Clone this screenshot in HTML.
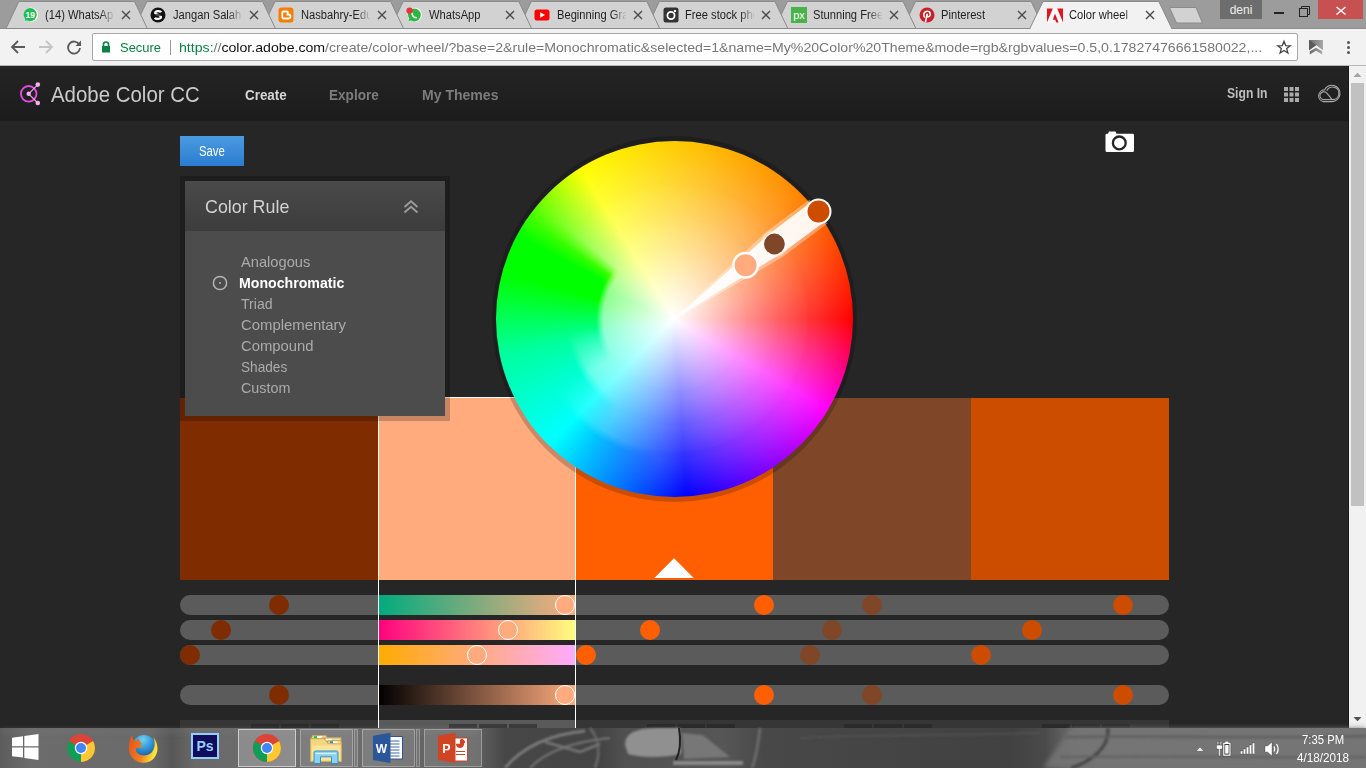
<!DOCTYPE html>
<html><head><meta charset="utf-8"><style>
*{margin:0;padding:0;box-sizing:border-box}
html,body{width:1366px;height:768px;overflow:hidden;background:#262626;font-family:"Liberation Sans",sans-serif}
.a{position:absolute}
svg{position:absolute;overflow:visible}
.tt{position:absolute;font-size:12px;color:#1e1e1e;white-space:nowrap;overflow:hidden;line-height:14px}
</style></head><body>
<div class="a" style="left:0;top:0;width:1366px;height:29px;background:#9c9c9c"></div>
<svg width="1366" height="30" style="left:0;top:0"><line x1="0" y1="28.5" x2="1366" y2="28.5" stroke="#8e8e8e" stroke-width="1"/><path d="M902.7 28.5 L915.5 1.5 L1031.2 1.5 L1044.0 28.5 Z" fill="#d2d2d2" stroke="#8a8a8a" stroke-width="1"/><path d="M774.6 28.5 L787.4 1.5 L903.1 1.5 L915.9 28.5 Z" fill="#d2d2d2" stroke="#8a8a8a" stroke-width="1"/><path d="M646.5 28.5 L659.3 1.5 L775.0 1.5 L787.8 28.5 Z" fill="#d2d2d2" stroke="#8a8a8a" stroke-width="1"/><path d="M518.4 28.5 L531.2 1.5 L646.9 1.5 L659.7 28.5 Z" fill="#d2d2d2" stroke="#8a8a8a" stroke-width="1"/><path d="M390.3 28.5 L403.1 1.5 L518.8 1.5 L531.6 28.5 Z" fill="#d2d2d2" stroke="#8a8a8a" stroke-width="1"/><path d="M262.2 28.5 L275.0 1.5 L390.7 1.5 L403.5 28.5 Z" fill="#d2d2d2" stroke="#8a8a8a" stroke-width="1"/><path d="M134.1 28.5 L146.9 1.5 L262.6 1.5 L275.4 28.5 Z" fill="#d2d2d2" stroke="#8a8a8a" stroke-width="1"/><path d="M6.0 28.5 L18.8 1.5 L134.5 1.5 L147.3 28.5 Z" fill="#d2d2d2" stroke="#8a8a8a" stroke-width="1"/><path d="M1029.8 28.5 L1043.0 1.5 L1158.8 1.5 L1171.8 28.5" fill="#f2f2f2" stroke="#8a8a8a" stroke-width="1"/><rect x="1030.8" y="28" width="140" height="2" fill="#f2f2f2"/><path d="M1169.5 7.5 L1196 7.5 L1202.5 23 L1176.5 23 Z" fill="#d2d2d2" stroke="#8a8a8a" stroke-width="1"/></svg>
<svg width="16" height="16" style="left:22.0px;top:6.5px" viewBox="0 0 16 16"><path d="M2.2 14.6 L3.2 11.2 A7 7 0 1 1 5.6 13.6 Z" fill="#fff"/><circle cx="8.2" cy="7.6" r="6.6" fill="#1ebe55"/><path d="M2.6 14.2 L3.6 10.8 L5.8 13 Z" fill="#1ebe55"/><text x="8.2" y="10.6" font-size="8.5" font-weight="bold" fill="#fff" text-anchor="middle" font-family="Liberation Sans">19</text></svg>
<div class="tt" style="left:44.5px;top:7.5px;width:69px"><span style="display:inline-block;transform:scaleX(0.93);transform-origin:0 0">(14) WhatsApp</span></div>
<div class="a" style="left:99.5px;top:6px;width:15px;height:18px;background:linear-gradient(90deg,rgba(0,0,0,0),#d2d2d2)"></div>
<svg width="10" height="10" style="left:120.5px;top:10px" viewBox="0 0 10 10"><path d="M1 1 L9 9 M9 1 L1 9" stroke="#4a4a4a" stroke-width="1.4"/></svg>
<svg width="16" height="16" style="left:150.1px;top:6.5px" viewBox="0 0 16 16"><circle cx="8" cy="8" r="7.5" fill="#111"/><path d="M11.2 5.2 C10.5 3.8 5.2 3.6 5.2 5.9 C5.2 8.2 11 7.4 11 10.1 C11 12.4 5.6 12.3 4.8 10.9" stroke="#fff" stroke-width="2.2" fill="none"/><rect x="3" y="7.3" width="10" height="1.4" fill="#111"/></svg>
<div class="tt" style="left:172.6px;top:7.5px;width:69px"><span style="display:inline-block;transform:scaleX(0.93);transform-origin:0 0">Jangan Salah Pilih</span></div>
<div class="a" style="left:227.6px;top:6px;width:15px;height:18px;background:linear-gradient(90deg,rgba(0,0,0,0),#d2d2d2)"></div>
<svg width="10" height="10" style="left:248.6px;top:10px" viewBox="0 0 10 10"><path d="M1 1 L9 9 M9 1 L1 9" stroke="#4a4a4a" stroke-width="1.4"/></svg>
<svg width="16" height="16" style="left:278.2px;top:6.5px" viewBox="0 0 16 16"><rect x="0.5" y="0.5" width="15" height="15" rx="3" fill="#f57d00"/><path d="M5 4.5 H8.5 A1.5 1.5 0 0 1 8.5 7.5 H10.5 A1.5 1.5 0 0 1 10.5 11.5 H5.5 A1.2 1.2 0 0 1 4.3 10.3 V5.7 A1.2 1.2 0 0 1 5 4.5Z" fill="none" stroke="#fff" stroke-width="1.8"/></svg>
<div class="tt" style="left:300.7px;top:7.5px;width:69px"><span style="display:inline-block;transform:scaleX(0.93);transform-origin:0 0">Nasbahry-Edu</span></div>
<div class="a" style="left:355.7px;top:6px;width:15px;height:18px;background:linear-gradient(90deg,rgba(0,0,0,0),#d2d2d2)"></div>
<svg width="10" height="10" style="left:376.7px;top:10px" viewBox="0 0 10 10"><path d="M1 1 L9 9 M9 1 L1 9" stroke="#4a4a4a" stroke-width="1.4"/></svg>
<svg width="16" height="16" style="left:406.3px;top:6.5px" viewBox="0 0 16 16"><path d="M1.6 15 L2.8 11.4 A7 7 0 1 1 5.2 13.8 Z" fill="#fff"/><circle cx="8.4" cy="8" r="6.4" fill="#2bb741"/><path d="M2.2 14.4 L3.3 11 L5.4 13.2 Z" fill="#2bb741"/><path d="M6 5.5 C6 9 8 10.8 11 10.8" stroke="#fff" stroke-width="1.6" fill="none"/><circle cx="3.6" cy="3.6" r="3.2" fill="#e8323c"/></svg>
<div class="tt" style="left:428.8px;top:7.5px;width:69px"><span style="display:inline-block;transform:scaleX(0.93);transform-origin:0 0">WhatsApp</span></div>
<div class="a" style="left:483.8px;top:6px;width:15px;height:18px;background:linear-gradient(90deg,rgba(0,0,0,0),#d2d2d2)"></div>
<svg width="10" height="10" style="left:504.8px;top:10px" viewBox="0 0 10 10"><path d="M1 1 L9 9 M9 1 L1 9" stroke="#4a4a4a" stroke-width="1.4"/></svg>
<svg width="16" height="16" style="left:534.4px;top:6.5px" viewBox="0 0 16 16"><rect x="0.5" y="2.5" width="15" height="11" rx="2.5" fill="#f00"/><path d="M6.2 5.2 L11 8 L6.2 10.8 Z" fill="#fff"/></svg>
<div class="tt" style="left:556.9px;top:7.5px;width:69px"><span style="display:inline-block;transform:scaleX(0.93);transform-origin:0 0">Beginning Graphic</span></div>
<div class="a" style="left:611.9px;top:6px;width:15px;height:18px;background:linear-gradient(90deg,rgba(0,0,0,0),#d2d2d2)"></div>
<svg width="10" height="10" style="left:632.9px;top:10px" viewBox="0 0 10 10"><path d="M1 1 L9 9 M9 1 L1 9" stroke="#4a4a4a" stroke-width="1.4"/></svg>
<svg width="16" height="16" style="left:662.5px;top:6.5px" viewBox="0 0 16 16"><rect x="0.5" y="0.5" width="15" height="15" rx="2.5" fill="#333"/><circle cx="8" cy="8.5" r="3.6" fill="none" stroke="#fff" stroke-width="1.8"/><rect x="11" y="3" width="2" height="2" fill="#fff"/></svg>
<div class="tt" style="left:685.0px;top:7.5px;width:69px"><span style="display:inline-block;transform:scaleX(0.93);transform-origin:0 0">Free stock photos</span></div>
<div class="a" style="left:740.0px;top:6px;width:15px;height:18px;background:linear-gradient(90deg,rgba(0,0,0,0),#d2d2d2)"></div>
<svg width="10" height="10" style="left:761.0px;top:10px" viewBox="0 0 10 10"><path d="M1 1 L9 9 M9 1 L1 9" stroke="#4a4a4a" stroke-width="1.4"/></svg>
<svg width="16" height="16" style="left:790.6px;top:6.5px" viewBox="0 0 16 16"><rect x="0" y="0" width="16" height="16" fill="#48b348"/><text x="8" y="12" font-size="11" fill="#fff" text-anchor="middle" font-family="Liberation Sans">px</text></svg>
<div class="tt" style="left:813.1px;top:7.5px;width:69px"><span style="display:inline-block;transform:scaleX(0.93);transform-origin:0 0">Stunning Free</span></div>
<div class="a" style="left:868.1px;top:6px;width:15px;height:18px;background:linear-gradient(90deg,rgba(0,0,0,0),#d2d2d2)"></div>
<svg width="10" height="10" style="left:889.1px;top:10px" viewBox="0 0 10 10"><path d="M1 1 L9 9 M9 1 L1 9" stroke="#4a4a4a" stroke-width="1.4"/></svg>
<svg width="16" height="16" style="left:918.7px;top:6.5px" viewBox="0 0 16 16"><circle cx="8" cy="8" r="7.5" fill="#cb2027"/><path d="M6.5 14.5 L8.2 7.6 M5.6 10 C4 8.5 4.6 4.2 8.4 4.2 C12 4.2 12.2 9.6 9 9.8 C7.8 9.9 7.6 8.8 7.9 7.6" stroke="#fff" stroke-width="1.6" fill="none" stroke-linecap="round"/></svg>
<div class="tt" style="left:941.2px;top:7.5px;width:69px"><span style="display:inline-block;transform:scaleX(0.93);transform-origin:0 0">Pinterest</span></div>
<div class="a" style="left:996.2px;top:6px;width:15px;height:18px;background:linear-gradient(90deg,rgba(0,0,0,0),#d2d2d2)"></div>
<svg width="10" height="10" style="left:1017.2px;top:10px" viewBox="0 0 10 10"><path d="M1 1 L9 9 M9 1 L1 9" stroke="#4a4a4a" stroke-width="1.4"/></svg>
<svg width="16" height="16" style="left:1046.8px;top:6.5px" viewBox="0 0 16 16"><rect x="0" y="1.5" width="16" height="14" fill="#fff"/><path d="M0 1.5 H5.8 L0 15.5 Z M10.2 1.5 H16 V15.5 Z M8 6.5 L11.6 15.5 H9.2 L8.2 12.8 H5.8 Z" fill="#e1151b"/></svg>
<div class="tt" style="left:1069.3px;top:7.5px;width:69px"><span style="display:inline-block;transform:scaleX(0.93);transform-origin:0 0">Color wheel</span></div>
<div class="a" style="left:1124.3px;top:6px;width:15px;height:18px;background:linear-gradient(90deg,rgba(0,0,0,0),#f2f2f2)"></div>
<svg width="10" height="10" style="left:1145.3px;top:10px" viewBox="0 0 10 10"><path d="M1 1 L9 9 M9 1 L1 9" stroke="#4a4a4a" stroke-width="1.4"/></svg>
<div class="a" style="left:1220px;top:0;width:42px;height:19px;background:#6d6d6d;color:#eee;font-size:12px;line-height:20px;text-align:center">deni</div>
<div class="a" style="left:1274px;top:12px;width:10px;height:2px;background:#222"></div>
<svg width="14" height="14" style="left:1298px;top:4px" viewBox="0 0 14 14"><rect x="1.5" y="4.5" width="8" height="8" fill="none" stroke="#222" stroke-width="1"/><path d="M3.5 4.5 V2.5 H11.5 V10.5 H9.5" fill="none" stroke="#222" stroke-width="1"/></svg>
<div class="a" style="left:1318px;top:0;width:45px;height:19px;background:#c75050"></div>
<svg width="12" height="12" style="left:1335px;top:4.5px" viewBox="0 0 12 12"><path d="M1.5 2 L10.5 9.5 M10.5 2 L1.5 9.5" stroke="#fff" stroke-width="1.5"/></svg>
<div class="a" style="left:0;top:29px;width:1366px;height:37px;background:#f2f2f2"></div>
<div class="a" style="left:0;top:65px;width:1366px;height:1px;background:#b8b8b8"></div>
<svg width="16" height="16" style="left:10px;top:39px" viewBox="0 0 16 16"><path d="M15 8 H2.5 M8 2 L2 8 L8 14" stroke="#5a5a5a" stroke-width="1.8" fill="none"/></svg>
<svg width="16" height="16" style="left:38px;top:39px" viewBox="0 0 16 16"><path d="M1 8 H13.5 M8 2 L14 8 L8 14" stroke="#c4c4c4" stroke-width="1.8" fill="none"/></svg>
<svg width="16" height="16" style="left:66px;top:39px" viewBox="0 0 16 16"><path d="M13.2 5.5 A6 6 0 1 0 14 9" stroke="#5a5a5a" stroke-width="1.8" fill="none"/><path d="M15 1.5 V7 H9.5 Z" fill="#5a5a5a"/></svg>
<div class="a" style="left:92px;top:33px;width:1206px;height:28px;background:#fff;border:1px solid #a9a9a9;border-radius:2px"></div>
<svg width="10" height="12" style="left:101px;top:41px" viewBox="0 0 10 12"><path d="M2.5 5 V3.5 A2.5 2.5 0 0 1 7.5 3.5 V5" stroke="#0b8043" stroke-width="1.6" fill="none"/><rect x="1" y="5" width="8" height="6.5" fill="#0b8043"/></svg>
<div class="a" style="left:119.50px;top:40.57px;font-size:13.5px;line-height:13.5px;color:#0b8043;font-weight:normal;white-space:nowrap;transform:scaleX(0.9582);transform-origin:0 0;">Secure</div>
<div class="a" style="left:170px;top:40px;width:1px;height:15px;background:#9a9a9a"></div>
<div class="a" style="left:178.70px;top:40.57px;font-size:13.5px;line-height:13.5px;color:#777;font-weight:normal;white-space:nowrap;transform:scaleX(1.0466);transform-origin:0 0;"><span style="color:#0b8043">https:</span>//<span style="color:#111">color.adobe.com</span>/create/color-wheel/?base=2&amp;rule=Monochromatic&amp;selected=1&amp;name=My%20Color%20Theme&amp;mode=rgb&amp;rgbvalues=0.5,0.17827476661580022,...</div>
<svg width="16" height="16" style="left:1276px;top:39px" viewBox="0 0 16 16"><path d="M8 2.3 L9.7 6.6 L14.2 6.8 L10.7 9.6 L11.9 14 L8 11.5 L4.1 14 L5.3 9.6 L1.8 6.8 L6.3 6.6 Z" fill="none" stroke="#444" stroke-width="1.3" stroke-linejoin="miter"/></svg>
<svg width="16" height="16" style="left:1308px;top:39px" viewBox="0 0 16 16"><defs><linearGradient id="exg" x1="0" x2="1"><stop offset="0" stop-color="#6a6a6a"/><stop offset="1" stop-color="#a8a8a8"/></linearGradient></defs><path d="M1 1 H15 V11.2 L8 6 L1 11.2 Z" fill="url(#exg)"/><path d="M1 1 L8.2 6.2 L1 11.2 Z" fill="#5a5a5a"/><path d="M1.8 12.3 L8 8.8 L14.2 12.3 V15.4 L8 11.8 L1.8 15.4 Z" fill="url(#exg)"/></svg>
<div class="a" style="left:1347px;top:41px;width:3px;height:3px;background:#555;border-radius:50%"></div>
<div class="a" style="left:1347px;top:46px;width:3px;height:3px;background:#555;border-radius:50%"></div>
<div class="a" style="left:1347px;top:51px;width:3px;height:3px;background:#555;border-radius:50%"></div>
<div class="a" style="left:0;top:66px;width:1349px;height:662px;background:#262626"></div>
<div class="a" style="left:0;top:66px;width:1349px;height:55px;background:linear-gradient(#242424,#1c1c1c)"></div>
<svg width="30" height="30" style="left:15px;top:79px" viewBox="0 0 30 30"><circle cx="13.7" cy="14.8" r="7.8" fill="none" stroke="#e64ce6" stroke-width="1.8"/><path d="M13.7 14.8 L22.8 5.6 M13.7 14.8 L22.8 24" stroke="#e8a0e8" stroke-width="1.2"/><circle cx="22.8" cy="5.6" r="2.3" fill="#f2b0f2"/><circle cx="22.8" cy="24" r="2.3" fill="#f2b0f2"/><circle cx="13.7" cy="14.8" r="2.2" fill="#f2b0f2"/></svg>
<div class="a" style="left:51.20px;top:84.15px;font-size:22.5px;line-height:22.5px;color:#cacaca;font-weight:normal;white-space:nowrap;transform:scaleX(0.9078);transform-origin:0 0;">Adobe Color CC</div>
<div class="a" style="left:245.40px;top:87.30px;font-size:15px;line-height:15px;color:#d6d6d6;font-weight:bold;white-space:nowrap;transform:scaleX(0.8932);transform-origin:0 0;">Create</div>
<div class="a" style="left:329.49px;top:87.30px;font-size:15px;line-height:15px;color:#7c7c7c;font-weight:bold;white-space:nowrap;transform:scaleX(0.9054);transform-origin:0 0;">Explore</div>
<div class="a" style="left:421.66px;top:87.30px;font-size:15px;line-height:15px;color:#7c7c7c;font-weight:bold;white-space:nowrap;transform:scaleX(0.9359);transform-origin:0 0;">My Themes</div>
<div class="a" style="left:1227.00px;top:85.95px;font-size:14px;line-height:14px;color:#bdbdbd;font-weight:bold;white-space:nowrap;transform:scaleX(0.8675);transform-origin:0 0;">Sign In</div>
<svg width="16" height="16" style="left:1284px;top:87px" viewBox="0 0 16 16"><rect x="0.0" y="0.0" width="4" height="4" fill="#aaa"/><rect x="5.5" y="0.0" width="4" height="4" fill="#aaa"/><rect x="11.0" y="0.0" width="4" height="4" fill="#aaa"/><rect x="0.0" y="5.5" width="4" height="4" fill="#aaa"/><rect x="5.5" y="5.5" width="4" height="4" fill="#aaa"/><rect x="11.0" y="5.5" width="4" height="4" fill="#aaa"/><rect x="0.0" y="11.0" width="4" height="4" fill="#aaa"/><rect x="5.5" y="11.0" width="4" height="4" fill="#aaa"/><rect x="11.0" y="11.0" width="4" height="4" fill="#aaa"/></svg>
<svg width="24" height="20" style="left:1317px;top:84px" viewBox="0 0 24 20"><path d="M6.5 17.6 A5.9 5.9 0 0 1 7.4 5.9 A8.2 8.2 0 1 1 15.2 17.6 Z" fill="none" stroke="#ababab" stroke-width="1.1"/><path d="M7 15.6 A3.9 3.9 0 1 1 9.5 8.9 L12.8 12.6 C13.8 13.8 14.5 15.6 15.5 15.6 A6.3 6.3 0 1 0 9.8 6.8" fill="none" stroke="#ababab" stroke-width="1.1"/><path d="M7 15.6 H15.5" stroke="#ababab" stroke-width="1.1"/></svg>
<div class="a" style="left:180px;top:136px;width:64px;height:30px;background:linear-gradient(#4b9be2,#2a7ccf)"></div>
<div class="a" style="left:199.00px;top:144.15px;font-size:14px;line-height:14px;color:#fff;font-weight:normal;white-space:nowrap;transform:scaleX(0.8094);transform-origin:0 0;">Save</div>
<svg width="32" height="24" style="left:1104px;top:130px" viewBox="0 0 32 24"><path d="M1.5 5 Q1.5 3.8 3 3.8 H4 L5 1.5 H11.5 L12.5 3.8 H28.5 Q30 3.8 30 5 V20.5 Q30 22 28.5 22 H3 Q1.5 22 1.5 20.5 Z" fill="#fff"/><circle cx="15.3" cy="12.9" r="6.4" fill="none" stroke="#262626" stroke-width="2.3"/></svg>
<div class="a" style="left:180.00px;top:398px;width:198.30px;height:182px;background:#7f2d00"></div>
<div class="a" style="left:377.80px;top:398px;width:198.30px;height:182px;background:#ffab7e"></div>
<div class="a" style="left:575.60px;top:398px;width:198.30px;height:182px;background:#ff5f00"></div>
<div class="a" style="left:773.40px;top:398px;width:198.30px;height:182px;background:#7f4627"></div>
<div class="a" style="left:971.20px;top:398px;width:198.30px;height:182px;background:#cc4c00"></div>
<svg width="40" height="22" style="left:654px;top:558px" viewBox="0 0 40 22"><path d="M0.3 20 L20 0.3 L39.7 20 Z" fill="#fff"/></svg>
<div class="a" style="left:180px;top:595px;width:989px;height:20px;border-radius:10px;background:#5b5b5b"></div>
<div class="a" style="left:180px;top:620px;width:989px;height:20px;border-radius:10px;background:#5b5b5b"></div>
<div class="a" style="left:180px;top:645px;width:989px;height:20px;border-radius:10px;background:#5b5b5b"></div>
<div class="a" style="left:180px;top:685px;width:989px;height:20px;border-radius:10px;background:#5b5b5b"></div>
<div class="a" style="left:378px;top:595px;width:198px;height:20px;background:linear-gradient(90deg,rgb(0,171,126),rgb(255,171,126))"></div>
<div class="a" style="left:378px;top:620px;width:198px;height:20px;background:linear-gradient(90deg,rgb(255,0,126),rgb(255,255,126))"></div>
<div class="a" style="left:378px;top:645px;width:198px;height:20px;background:linear-gradient(90deg,rgb(255,171,0),rgb(255,171,255))"></div>
<div class="a" style="left:378px;top:685px;width:198px;height:20px;background:linear-gradient(90deg,#000,#ffab7e)"></div>
<div class="a" style="left:268.6px;top:595px;width:20px;height:20px;border-radius:50%;background:#7f2d00"></div>
<div class="a" style="left:211.4px;top:620px;width:20px;height:20px;border-radius:50%;background:#7f2d00"></div>
<div class="a" style="left:180.0px;top:645px;width:20px;height:20px;border-radius:50%;background:#7f2d00"></div>
<div class="a" style="left:268.6px;top:685px;width:20px;height:20px;border-radius:50%;background:#7f2d00"></div>
<div class="a" style="left:554.7px;top:595px;width:20px;height:20px;border-radius:50%;background:#ffab7e;border:1px solid #fff"></div>
<div class="a" style="left:498.0px;top:620px;width:20px;height:20px;border-radius:50%;background:#ffab7e;border:1px solid #fff"></div>
<div class="a" style="left:466.9px;top:645px;width:20px;height:20px;border-radius:50%;background:#ffab7e;border:1px solid #fff"></div>
<div class="a" style="left:554.7px;top:685px;width:20px;height:20px;border-radius:50%;background:#ffab7e;border:1px solid #fff"></div>
<div class="a" style="left:753.6px;top:595px;width:20px;height:20px;border-radius:50%;background:#ff5f00"></div>
<div class="a" style="left:640.0px;top:620px;width:20px;height:20px;border-radius:50%;background:#ff5f00"></div>
<div class="a" style="left:576.3px;top:645px;width:20px;height:20px;border-radius:50%;background:#ff5f00"></div>
<div class="a" style="left:753.6px;top:685px;width:20px;height:20px;border-radius:50%;background:#ff5f00"></div>
<div class="a" style="left:861.8px;top:595px;width:20px;height:20px;border-radius:50%;background:#7f4627"></div>
<div class="a" style="left:822.0px;top:620px;width:20px;height:20px;border-radius:50%;background:#7f4627"></div>
<div class="a" style="left:800.0px;top:645px;width:20px;height:20px;border-radius:50%;background:#7f4627"></div>
<div class="a" style="left:861.8px;top:685px;width:20px;height:20px;border-radius:50%;background:#7f4627"></div>
<div class="a" style="left:1113.0px;top:595px;width:20px;height:20px;border-radius:50%;background:#cc4c00"></div>
<div class="a" style="left:1022.0px;top:620px;width:20px;height:20px;border-radius:50%;background:#cc4c00"></div>
<div class="a" style="left:971.0px;top:645px;width:20px;height:20px;border-radius:50%;background:#cc4c00"></div>
<div class="a" style="left:1113.0px;top:685px;width:20px;height:20px;border-radius:50%;background:#cc4c00"></div>
<div class="a" style="left:180px;top:720px;width:989px;height:8px;background:#363636"></div>
<div class="a" style="left:378px;top:720px;width:198px;height:8px;background:#5a5a5a"></div>
<div class="a" style="left:251.0px;top:724px;width:28px;height:4px;background:#2a2a2a"></div>
<div class="a" style="left:281.0px;top:724px;width:28px;height:4px;background:#2a2a2a"></div>
<div class="a" style="left:311.0px;top:724px;width:28px;height:4px;background:#2a2a2a"></div>
<div class="a" style="left:448.8px;top:724px;width:28px;height:4px;background:#3a3a3a"></div>
<div class="a" style="left:478.8px;top:724px;width:28px;height:4px;background:#3a3a3a"></div>
<div class="a" style="left:508.8px;top:724px;width:28px;height:4px;background:#3a3a3a"></div>
<div class="a" style="left:646.6px;top:724px;width:28px;height:4px;background:#2a2a2a"></div>
<div class="a" style="left:676.6px;top:724px;width:28px;height:4px;background:#2a2a2a"></div>
<div class="a" style="left:706.6px;top:724px;width:28px;height:4px;background:#2a2a2a"></div>
<div class="a" style="left:844.4px;top:724px;width:28px;height:4px;background:#2a2a2a"></div>
<div class="a" style="left:874.4px;top:724px;width:28px;height:4px;background:#2a2a2a"></div>
<div class="a" style="left:904.4px;top:724px;width:28px;height:4px;background:#2a2a2a"></div>
<div class="a" style="left:1042.2px;top:724px;width:28px;height:4px;background:#2a2a2a"></div>
<div class="a" style="left:1072.2px;top:724px;width:28px;height:4px;background:#2a2a2a"></div>
<div class="a" style="left:1102.2px;top:724px;width:28px;height:4px;background:#2a2a2a"></div>
<div class="a" style="left:378px;top:397px;width:198px;height:1px;background:#fff"></div>
<div class="a" style="left:378px;top:397px;width:1px;height:331px;background:#fff"></div>
<div class="a" style="left:575px;top:397px;width:1px;height:331px;background:#fff"></div>
<div class="a" style="left:180px;top:176px;width:270px;height:245px;background:rgba(0,0,0,0.22)"></div>
<div class="a" style="left:185px;top:181px;width:260px;height:235px;background:#4c4c4c"></div>
<div class="a" style="left:185px;top:181px;width:260px;height:50px;background:linear-gradient(#4a4a4a,#3c3c3c)"></div>
<div class="a" style="left:205.20px;top:196.92px;font-size:19px;line-height:19px;color:#d2d2d2;font-weight:normal;white-space:nowrap;transform:scaleX(0.9396);transform-origin:0 0;">Color Rule</div>
<svg width="16" height="14" style="left:403px;top:200px" viewBox="0 0 16 14"><path d="M1.5 7 L8 1.2 L14.5 7 M1.5 12.5 L8 6.7 L14.5 12.5" fill="none" stroke="#9c9c9c" stroke-width="1.9"/></svg>
<div class="a" style="left:240.50px;top:254.30px;font-size:15px;line-height:15px;color:#ababab;font-weight:normal;white-space:nowrap;transform:scaleX(0.9774);transform-origin:0 0;">Analogous</div>
<div class="a" style="left:239.26px;top:275.30px;font-size:15px;line-height:15px;color:#fff;font-weight:bold;white-space:nowrap;transform:scaleX(0.9426);transform-origin:0 0;">Monochromatic</div>
<div class="a" style="left:240.50px;top:296.30px;font-size:15px;line-height:15px;color:#ababab;font-weight:normal;white-space:nowrap;transform:scaleX(0.9436);transform-origin:0 0;">Triad</div>
<div class="a" style="left:240.50px;top:317.30px;font-size:15px;line-height:15px;color:#ababab;font-weight:normal;white-space:nowrap;transform:scaleX(0.9918);transform-origin:0 0;">Complementary</div>
<div class="a" style="left:240.50px;top:338.30px;font-size:15px;line-height:15px;color:#ababab;font-weight:normal;white-space:nowrap;transform:scaleX(0.9885);transform-origin:0 0;">Compound</div>
<div class="a" style="left:240.50px;top:359.30px;font-size:15px;line-height:15px;color:#ababab;font-weight:normal;white-space:nowrap;transform:scaleX(0.9092);transform-origin:0 0;">Shades</div>
<div class="a" style="left:240.50px;top:380.30px;font-size:15px;line-height:15px;color:#ababab;font-weight:normal;white-space:nowrap;transform:scaleX(0.9554);transform-origin:0 0;">Custom</div>
<svg width="18" height="18" style="left:211px;top:273.5px" viewBox="0 0 18 18"><circle cx="9" cy="9" r="6.6" fill="none" stroke="#b4b4b4" stroke-width="1.5"/><circle cx="9" cy="9" r="1" fill="#b4b4b4"/></svg>
<div class="a" style="left:492px;top:136px;width:365px;height:366px;border-radius:50%;background:rgba(0,0,0,0.2)"></div>
<div class="a" style="left:496px;top:141px;width:357px;height:356px;border-radius:50%;background:conic-gradient(from 0deg,#ffcc00 0deg,#ff8800 44deg,#ff0000 90deg,#ff00ff 121deg,#0000ff 176deg,#0080ff 200deg,#00ffff 225deg,#00ffa0 258deg,#00ff00 285deg,#00ff00 298deg,#60ff00 309deg,#ffff00 328deg,#ffcc00 360deg)"></div>
<div class="a" style="left:496px;top:141px;width:357px;height:356px;border-radius:50%;background:conic-gradient(from 0deg,rgba(0,255,0,0) 0deg,rgba(0,255,0,0) 282deg,#00ff00 292deg,#ffff00 327deg,rgba(255,255,0,0) 336deg,rgba(255,255,0,0) 360deg);-webkit-mask-image:radial-gradient(circle closest-side,#000 0%,#000 41%,rgba(0,0,0,0) 46%);mask-image:radial-gradient(circle closest-side,#000 0%,#000 41%,rgba(0,0,0,0) 46%)"></div>
<div class="a" style="left:496px;top:141px;width:357px;height:356px;border-radius:50%;background:radial-gradient(circle closest-side,rgba(255,255,255,1.000) 0.0%,rgba(255,255,255,0.570) 40.0%,rgba(255,255,255,0.000) 44.0%,rgba(255,255,255,0.000) 100.0%);"></div>
<div class="a" style="left:496px;top:141px;width:357px;height:356px;border-radius:50%;background:radial-gradient(circle closest-side,rgba(255,255,255,0.000) 0.0%,rgba(255,255,255,0.000) 40.0%,rgba(255,255,255,0.231) 41.0%,rgba(255,255,255,0.370) 42.0%,rgba(255,255,255,0.462) 43.0%,rgba(255,255,255,0.528) 44.0%,rgba(255,255,255,0.405) 56.0%,rgba(255,255,255,0.000) 61.0%,rgba(255,255,255,0.000) 100.0%);-webkit-mask-image:conic-gradient(from 0deg,rgba(0,0,0,1) 0deg,rgba(0,0,0,1) 238deg,rgba(0,0,0,0) 264deg,rgba(0,0,0,0) 304deg,rgba(0,0,0,1) 311deg,rgba(0,0,0,1) 360deg);mask-image:conic-gradient(from 0deg,rgba(0,0,0,1) 0deg,rgba(0,0,0,1) 238deg,rgba(0,0,0,0) 264deg,rgba(0,0,0,0) 304deg,rgba(0,0,0,1) 311deg,rgba(0,0,0,1) 360deg)"></div>
<div class="a" style="left:496px;top:141px;width:357px;height:356px;border-radius:50%;background:radial-gradient(circle closest-side,rgba(255,255,255,0.000) 0.0%,rgba(255,255,255,0.000) 56.0%,rgba(255,255,255,0.105) 57.0%,rgba(255,255,255,0.188) 58.0%,rgba(255,255,255,0.309) 60.0%,rgba(255,255,255,0.355) 61.0%,rgba(255,255,255,0.227) 74.0%,rgba(255,255,255,0.000) 79.0%,rgba(255,255,255,0.000) 100.0%);-webkit-mask-image:conic-gradient(from 0deg,rgba(0,0,0,1) 0deg,rgba(0,0,0,1) 212deg,rgba(0,0,0,0) 240deg,rgba(0,0,0,0) 304deg,rgba(0,0,0,1) 311deg,rgba(0,0,0,1) 360deg);mask-image:conic-gradient(from 0deg,rgba(0,0,0,1) 0deg,rgba(0,0,0,1) 212deg,rgba(0,0,0,0) 240deg,rgba(0,0,0,0) 304deg,rgba(0,0,0,1) 311deg,rgba(0,0,0,1) 360deg)"></div>
<div class="a" style="left:496px;top:141px;width:357px;height:356px;border-radius:50%;background:radial-gradient(circle closest-side,rgba(255,255,255,0.000) 0.0%,rgba(255,255,255,0.000) 74.0%,rgba(255,255,255,0.150) 78.0%,rgba(255,255,255,0.180) 79.0%,rgba(255,255,255,0.000) 100.0%);-webkit-mask-image:conic-gradient(from 0deg,rgba(0,0,0,1) 0deg,rgba(0,0,0,1) 186deg,rgba(0,0,0,0) 214deg,rgba(0,0,0,0) 304deg,rgba(0,0,0,1) 311deg,rgba(0,0,0,1) 360deg);mask-image:conic-gradient(from 0deg,rgba(0,0,0,1) 0deg,rgba(0,0,0,1) 186deg,rgba(0,0,0,0) 214deg,rgba(0,0,0,0) 304deg,rgba(0,0,0,1) 311deg,rgba(0,0,0,1) 360deg)"></div>
<svg width="357" height="357" style="left:496px;top:141px" viewBox="496 141 357 357">
<path d="M673.90 318.20 L765.61 232.26 L809.53 199.48 L827.47 223.52 L783.56 256.30 L675.10 319.80 Z" fill="#fff" fill-opacity="0.35"/>
<path d="M676.10 317.80 L741.03 259.35 L767.71 235.07 L811.32 201.88 L825.68 221.12 L781.47 253.50 L750.60 272.17 Z" fill="#fff" fill-opacity="0.9"/>
<circle cx="774.4" cy="244" r="13.5" fill="#fff" fill-opacity="0.4"/>
<circle cx="818.5" cy="211.5" r="13" fill="#fff"/>
<circle cx="818.5" cy="211.5" r="11" fill="#cc4c00"/>
<circle cx="774.4" cy="244" r="10.4" fill="#7f4627"/>
<circle cx="745.6" cy="265.2" r="13.5" fill="#fff"/>
<circle cx="745.6" cy="265.2" r="11" fill="#ffab7e"/>
</svg>
<div class="a" style="left:1349px;top:66px;width:17px;height:662px;background:#f1f1f1"></div>
<div class="a" style="left:1348px;top:66px;width:1px;height:662px;background:#1a1a1a"></div>
<div class="a" style="left:1351px;top:83px;width:13px;height:423px;background:#c1c1c1"></div>
<svg width="9" height="6" style="left:1353px;top:72px" viewBox="0 0 9 6"><path d="M0.5 5 L4.5 0.8 L8.5 5 Z" fill="#a3a3a3"/></svg>
<svg width="9" height="6" style="left:1353px;top:716px" viewBox="0 0 9 6"><path d="M0.5 1 L4.5 5.2 L8.5 1 Z" fill="#505050"/></svg>
<svg width="1366" height="40" style="left:0;top:728px" viewBox="0 728 1366 40">
<defs>
<filter id="bl1" x="-20%" y="-50%" width="140%" height="200%"><feGaussianBlur stdDeviation="1.2"/></filter>
<filter id="bl2" x="-20%" y="-50%" width="140%" height="200%"><feGaussianBlur stdDeviation="2.5"/></filter>
<linearGradient id="tbg" x1="0" x2="1366" y1="0" y2="0" gradientUnits="userSpaceOnUse">
<stop offset="0" stop-color="#5c5c5c"/><stop offset="0.022" stop-color="#6c6c6c"/><stop offset="0.11" stop-color="#6a6a6a"/>
<stop offset="0.126" stop-color="#575757"/><stop offset="0.143" stop-color="#6a6a6a"/><stop offset="0.249" stop-color="#6e6e6e"/>
<stop offset="0.351" stop-color="#5e5e5e"/><stop offset="0.37" stop-color="#474747"/><stop offset="0.44" stop-color="#444"/>
<stop offset="0.457" stop-color="#505050"/><stop offset="0.53" stop-color="#565656"/><stop offset="0.56" stop-color="#484848"/>
<stop offset="0.74" stop-color="#414141"/><stop offset="0.765" stop-color="#4a4a4a"/><stop offset="0.79" stop-color="#727272"/>
<stop offset="0.85" stop-color="#747474"/><stop offset="1" stop-color="#767676"/>
</linearGradient>
</defs>
<rect x="0" y="728" width="1366" height="40" fill="url(#tbg)"/>
<g filter="url(#bl2)" opacity="0.9">
<path d="M1043 768 L1071 728 L1366 728 L1366 768 Z" fill="#747474"/>
<rect x="0" y="728" width="480" height="6" fill="#7a7a7a" opacity="0.25"/>
</g>
<g filter="url(#bl1)">
<path d="M625 745 C625 731 640 728 660 728 L680 728 L681 754 C665 758 640 758 628 754 Z" fill="#909090"/>
<path d="M682 733 L703 735 L730 757 L684 759 Z" fill="#777"/>
<rect x="673" y="761" width="70" height="4" fill="#8a8a8a"/>
<path d="M505 768 C520 750 545 735 585 731" stroke="#7a7a7a" stroke-width="3" fill="none"/>
<path d="M530 768 C545 752 570 742 610 738" stroke="#6e6e6e" stroke-width="2.5" fill="none"/>
<path d="M545 742 L580 752 L600 744" stroke="#777" stroke-width="2.5" fill="none"/>
<path d="M590 728 C600 740 600 755 595 768" stroke="#6a6a6a" stroke-width="2.5" fill="none"/>
<path d="M760 728 C758 745 756 758 752 768" stroke="#6a6a6a" stroke-width="3" fill="none"/>
<path d="M1108 728 C1110 748 1090 762 1071 768" stroke="#4a4a4a" stroke-width="3.5" fill="none"/>
<path d="M1065 737 C1150 735 1250 739 1366 736" stroke="#5e5e5e" stroke-width="3" fill="none" opacity="0.8"/>
<path d="M1060 757 C1150 755 1250 758 1366 757" stroke="#606060" stroke-width="2.5" fill="none" opacity="0.8"/>
<path d="M800 738 C870 734 950 736 1040 733" stroke="#555" stroke-width="2" fill="none" opacity="0.7"/>
</g>
<path d="M679 728 C681 740 680 752 676 760" stroke="#222" stroke-width="2" fill="none"/>
</svg>
<svg width="28" height="26" style="left:12px;top:734px" viewBox="0 0 28 26"><path d="M0 3.8 L11 2.3 V12.3 H0 Z M12.3 2.1 L26.5 0 V12.3 H12.3 Z M0 13.6 H11 V23.6 L0 22.2 Z M12.3 13.6 H26.5 V26 L12.3 23.9 Z" fill="#fff"/></svg>
<svg width="28" height="28" style="left:67px;top:734px" viewBox="-14 -14 28 28">
<circle r="14" fill="#db4437"/>
<path d="M0 0 L12.12 -7 A14 14 0 0 1 0 14 Z" fill="#fcc934"/>
<path d="M0 0 L0 14 A14 14 0 0 1 -12.12 -7 Z" fill="#0f9d58"/>
<circle r="6.2" fill="#fff"/><circle r="5" fill="#4285f4"/></svg>
<svg width="30" height="30" style="left:128px;top:733px" viewBox="0 0 30 30">
<defs><radialGradient id="ffg" cx="0.45" cy="0.2" r="0.9"><stop offset="0" stop-color="#6fd3f5"/><stop offset="0.5" stop-color="#2a8fd2"/><stop offset="1" stop-color="#1a3f8f"/></radialGradient>
<linearGradient id="ffo" x1="0" y1="0" x2="1" y2="0.3"><stop offset="0" stop-color="#e4501c"/><stop offset="0.6" stop-color="#f07f1e"/><stop offset="1" stop-color="#fde23a"/></linearGradient></defs>
<circle cx="16" cy="13.5" r="11.5" fill="url(#ffg)"/>
<path d="M3.5 2.5 C2 6 0.8 10 0.8 15 C0.8 23.5 7.5 29.8 15.5 29.8 C23.5 29.8 29.5 23.5 29.5 15.5 C29.5 11 27.5 6.5 25.5 4.5 C27.5 9.5 27 15.5 23.5 19.5 C20 23 13.5 23.5 10 20.5 C7.5 18.5 7 15.5 9.5 14.5 C11.5 14 14 15.5 15.5 14.5 C12.5 13.5 12 11.5 13.5 10 C12 9 10.5 7 11 5.5 C9 7.5 7.5 8 6 7.5 C5 6 4.5 4 3.5 2.5 Z" fill="url(#ffo)"/>
</svg>
<div class="a" style="left:191px;top:733px;width:28px;height:26px;background:#110c5c;border:2px solid #94cffc;color:#94cffc;font-weight:bold;font-size:14px;line-height:22px;text-align:center">Ps</div>
<div class="a" style="left:238px;top:729px;width:58px;height:38px;background:rgba(255,255,255,0.22);border:1px solid rgba(255,255,255,0.55)"></div>
<svg width="28" height="28" style="left:253px;top:734px" viewBox="-14 -14 28 28">
<circle r="14" fill="#db4437"/>
<path d="M0 0 L12.12 -7 A14 14 0 0 1 0 14 Z" fill="#fcc934"/>
<path d="M0 0 L0 14 A14 14 0 0 1 -12.12 -7 Z" fill="#0f9d58"/>
<circle r="6.2" fill="#fff"/><circle r="5" fill="#4285f4"/></svg>
<div class="a" style="left:300px;top:729px;width:53px;height:38px;background:rgba(255,255,255,0.12);border:1px solid rgba(255,255,255,0.3)"></div>
<div class="a" style="left:354px;top:729px;width:4px;height:38px;background:rgba(255,255,255,0.1);border:1px solid rgba(255,255,255,0.25)"></div>
<svg width="32" height="30" style="left:310px;top:734px" viewBox="0 0 32 30">
<path d="M1.5 4.5 L2.5 1.5 H16 L17 4.5 Z" fill="#f0d68a" stroke="#c9a85e" stroke-width="0.8"/>
<rect x="4" y="2.2" width="3" height="2" fill="#1fbf2f"/><rect x="7" y="2.2" width="5" height="1.6" fill="#fff"/>
<path d="M10.5 7 L11.5 3.8 H31 L31 7 Z" fill="#f0d68a" stroke="#c9a85e" stroke-width="0.8"/>
<rect x="12.5" y="4.5" width="3" height="2" fill="#d8322a"/><rect x="15.5" y="4.8" width="6" height="1.5" fill="#fff"/>
<path d="M0.5 27.5 V4.8 H14 L17 8.5 H31.5 V27.5 Z" fill="#f3d77e" stroke="#cfae5c" stroke-width="0.9"/>
<path d="M17.5 9.5 L18.5 6.5 H31 V10 Z" fill="#f0d68a" stroke="#c9a85e" stroke-width="0.8"/>
<rect x="20" y="7.2" width="3" height="2" fill="#1e90e0"/><rect x="23" y="7.5" width="4.5" height="1.5" fill="#fff"/>
<path d="M2 11.5 H30 V26 H2 Z" fill="#f9e49a"/>
<path d="M4 29.6 V18.5 Q4 17 5.5 17 H26.5 Q28 17 28 18.5 V29.6 H21.5 V22.8 H10.5 V29.6 Z" fill="#8ad2f0" stroke="#2a86c8" stroke-width="0.9"/>
<path d="M5.5 19.5 H26" stroke="#d8f2ff" stroke-width="1.2"/>
</svg>
<div class="a" style="left:362px;top:729px;width:53px;height:38px;background:rgba(255,255,255,0.12);border:1px solid rgba(255,255,255,0.3)"></div>
<div class="a" style="left:416px;top:729px;width:4px;height:38px;background:rgba(255,255,255,0.1);border:1px solid rgba(255,255,255,0.25)"></div>
<svg width="32" height="32" style="left:372px;top:732px" viewBox="0 0 32 32">
<rect x="14" y="4.5" width="16.5" height="22.5" fill="#fff" stroke="#2b579a" stroke-width="1"/>
<path d="M18 9 H27.5 M18 12 H27.5 M18 15 H27.5 M18 18 H27.5 M18 21 H27.5 M18 24 H27.5" stroke="#2b579a" stroke-width="0.9"/>
<path d="M1 3.8 L18.5 0.8 V31 L1 28Z" fill="#2b579a"/>
<text x="9.3" y="21" font-size="12" font-weight="bold" fill="#fff" text-anchor="middle" font-family="Liberation Sans">W</text>
</svg>
<div class="a" style="left:424px;top:729px;width:58px;height:38px;background:rgba(255,255,255,0.12);border:1px solid rgba(255,255,255,0.3)"></div>
<svg width="32" height="32" style="left:437px;top:732px" viewBox="0 0 32 32">
<rect x="14" y="6" width="16.5" height="23" fill="#fff" stroke="#d04423" stroke-width="1"/>
<path d="M23 7.5 A4.2 4.2 0 1 1 18.8 11.7 H23 Z" fill="#d04423"/>
<path d="M24 6.8 A4.2 4.2 0 0 1 28.2 11 H24 Z" fill="#d04423"/>
<path d="M19 19.5 H28 M19 22.5 H28" stroke="#d04423" stroke-width="1"/>
<path d="M1 3.8 L18.5 0.8 V31 L1 28Z" fill="#d04423"/>
<text x="9.5" y="20.5" font-size="12.5" font-weight="bold" fill="#fff" text-anchor="middle" font-family="Liberation Sans">P</text>
</svg>
<svg width="10" height="6" style="left:1195px;top:746px" viewBox="0 0 10 6"><path d="M1 5.3 L5 1 L9 5.3 Z" fill="#eef" stroke="#333" stroke-width="0.4"/></svg>
<svg width="18" height="17" style="left:1215px;top:740px" viewBox="0 0 18 17"><g stroke="#222" stroke-width="0.6" stroke-opacity="0.6"><path d="M2.2 1.5 H3.6 V5 H2.2Z M5.2 1.5 H6.6 V5 H5.2Z M1.5 5 H7.3 V9 H5.2 V16 H3.6 V9 H1.5Z" fill="#fff"/><path d="M10 1.3 H13.5 V2.5 H15.8 V16 H8 V2.5 H10Z" fill="#fff"/></g><rect x="9.4" y="4" width="5" height="10.6" fill="#3a3a3a"/><rect x="10.2" y="5" width="3.4" height="8.6" fill="#fff"/></svg>
<svg width="16" height="13" style="left:1240px;top:742px" viewBox="0 0 16 13"><g fill="#fff" stroke="#222" stroke-width="0.5" stroke-opacity="0.6"><rect x="0.3" y="9" width="2.4" height="3"/><rect x="3.3" y="7" width="2.4" height="5"/><rect x="6.3" y="5" width="2.4" height="7"/><rect x="9.3" y="3" width="2.4" height="9"/><rect x="12.3" y="1" width="2.4" height="11"/></g></svg>
<svg width="17" height="16" style="left:1264px;top:741px" viewBox="0 0 17 16"><path d="M1 5 H3.5 L8 1 V15 L3.5 11 H1Z" fill="#fff" stroke="#222" stroke-width="0.5" stroke-opacity="0.6"/><path d="M10 5.5 Q11.5 8 10 10.5 M12.5 3 Q15.8 8 12.5 13" fill="none" stroke="#fff" stroke-width="1.3"/></svg>
<div class="a" style="left:1302.20px;top:734.42px;font-size:12.5px;line-height:12.5px;color:#fff;font-weight:normal;white-space:nowrap;transform:scaleX(0.9038);transform-origin:0 0;">7:35 PM</div>
<div class="a" style="left:1297.00px;top:751.62px;font-size:12.5px;line-height:12.5px;color:#fff;font-weight:normal;white-space:nowrap;transform:scaleX(0.9343);transform-origin:0 0;">4/18/2018</div>
</body></html>
